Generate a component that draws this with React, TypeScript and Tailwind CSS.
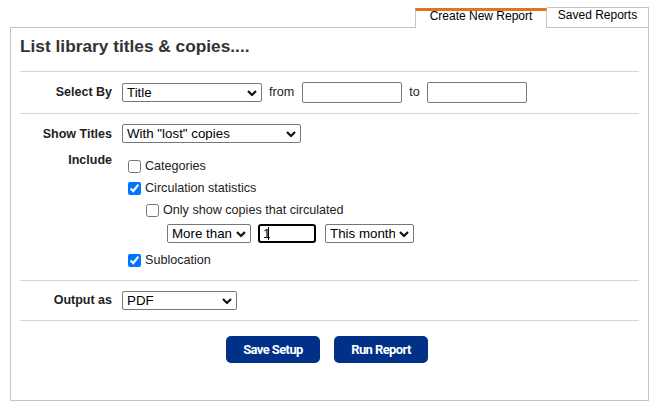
import React from "react";

function Chevron() {
  return (
    <svg
      className="pointer-events-none absolute right-[5px] top-1/2 -translate-y-1/2"
      width="10"
      height="7"
      viewBox="0 0 10 7"
      fill="none"
    >
      <path d="M1 1.5l4 4 4-4" stroke="#111" strokeWidth="2.2" />
    </svg>
  );
}

function Select({ className, value }: { className: string; value: string }) {
  return (
    <div className={`relative ${className}`}>
      <select
        value={value}
        onChange={() => {}}
        className="h-full w-full appearance-none rounded-[2px] border border-[#767676] bg-white pl-[4px] pr-[18px] text-[13.33px] leading-none text-black outline-none"
      >
        <option>{value}</option>
      </select>
      <Chevron />
    </div>
  );
}

function Check({ checked, label }: { checked?: boolean; label: string }) {
  return (
    <label className="flex h-[22px] items-center gap-[4px]">
      <input type="checkbox" defaultChecked={checked} className="m-0 h-[13px] w-[13px]" />
      <span>{label}</span>
    </label>
  );
}

export default function App() {
  return (
    <div className="h-[412px] w-[661px] bg-white font-['Liberation_Sans',Arial,sans-serif] text-[12.6px] text-[#222]">
      <div className="ml-[10px] w-[639px] pt-[7px]">
        {/* tabs */}
        <div className="relative z-10 -mb-px flex items-end justify-end text-[12px] text-black">
          <div className="flex h-[20px] w-[132px] items-start justify-center border-x border-t-[3px] border-x-[#c4c4c4] border-t-[#e37222] bg-white leading-[12px]">
            <span className="-mt-px">Create New Report</span>
          </div>
          <div className="flex h-[21px] w-[102px] items-start justify-center border border-l-0 border-[#c4c4c4] bg-white leading-[14px]">
            Saved Reports
          </div>
        </div>

        {/* panel */}
        <div className="h-[374px] border border-[#c4c4c4] px-[9px]">
          <h1 className="pt-[8px] pb-[15px] text-[17.3px] font-bold leading-[20px] text-[#333]">
            List library titles &amp; copies....
          </h1>

          <div className="flex items-center border-t border-[#d4d4d4] py-[10px]">
            <div className="w-[92px] text-right text-[12.5px] font-bold">Select By</div>
            <Select className="ml-[10px] h-[19px] w-[140px]" value="Title" />
            <span className="ml-[7px]">from</span>
            <input className="ml-[8px] h-[21px] w-[100px] rounded-[2px] border border-[#767676]" />
            <span className="ml-[7px]">to</span>
            <input className="ml-[7px] h-[21px] w-[100px] rounded-[2px] border border-[#767676]" />
          </div>

          <div className="border-t border-[#d4d4d4] pt-[10px] pb-[9px]">
            <div className="flex items-center">
              <div className="relative top-px w-[92px] text-right text-[12.5px] font-bold">Show Titles</div>
              <Select className="ml-[10px] h-[19px] w-[179px]" value={'With "lost" copies'} />
            </div>
            <div className="mt-[9px] flex">
              <div className="w-[92px] text-right text-[12.5px] font-bold leading-[16px]">Include</div>
              <div className="ml-[16px] flex flex-col pt-[3px]">
                <Check label="Categories" />
                <Check checked label="Circulation statistics" />
                <div className="pl-[18px]">
                  <Check label="Only show copies that circulated" />
                  <div className="mt-[3px] flex items-center pl-[21px]">
                    <Select className="h-[19px] w-[84px]" value="More than" />
                    <div className="relative ml-[7px] h-[19px] w-[58px]">
                      <input
                        value="1"
                        onChange={() => {}}
                        className="h-full w-full rounded-[3px] border-2 border-black pl-[3px] text-[13.33px] leading-none text-black outline-none"
                      />
                      <span className="absolute left-[10px] top-[3px] h-[13px] w-px bg-black" />
                    </div>
                    <Select className="ml-[9px] h-[19px] w-[89px]" value="This month" />
                  </div>
                </div>
                <div className="mt-[6px]">
                  <Check checked label="Sublocation" />
                </div>
              </div>
            </div>
          </div>

          <div className="flex items-center border-t border-[#d4d4d4] py-[10px]">
            <div className="w-[92px] text-right text-[12.5px] font-bold">Output as</div>
            <Select className="ml-[10px] h-[19px] w-[115px]" value="PDF" />
          </div>

          <div className="flex justify-center gap-[14px] border-t border-[#d4d4d4] pt-[15px] pr-[5px]">
            <button className="h-[27px] w-[94px] rounded-[5px] bg-[#003087] font-['Roboto',sans-serif] text-[13px] font-bold tracking-[-0.6px] text-white">
              Save Setup
            </button>
            <button className="h-[27px] w-[94px] rounded-[5px] bg-[#003087] font-['Roboto',sans-serif] text-[13px] font-bold tracking-[-0.6px] text-white">
              Run Report
            </button>
          </div>
        </div>
      </div>
    </div>
  );
}
